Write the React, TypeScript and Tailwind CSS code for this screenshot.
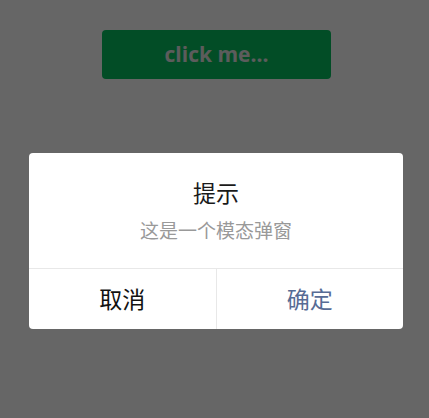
export default function App() {
	return (
		<div
			className="relative h-[418px] w-full overflow-hidden bg-white"
			style={{ fontFamily: '"Open Sans", "Noto Sans CJK SC", sans-serif' }}
		>
			<div className="flex flex-col pl-[102px] pt-[30px]">
				<button
					type="button"
					className="flex h-[49px] w-[229px] items-center justify-center rounded-[4px] bg-[#07c160] text-[21px] font-bold text-[#e6e6e6]"
				>
					click me...
				</button>
			</div>

			{/* mask + dialog */}
			<div className="absolute inset-0 bg-black/60">
				<div className="ml-[29px] mt-[153px] flex w-[374px] flex-col overflow-hidden rounded-[4px] bg-white font-['Noto_Sans_CJK_SC',sans-serif]">
					<div className="flex h-[116px] flex-col items-center border-b border-[#e8e8e8] pt-[22px]">
						<div className="text-[23px] leading-[34px] text-[#1a1a1a]">提示</div>
						<div className="mt-[8px] text-[19px] leading-[26px] text-[#999999]">
							这是一个模态弹窗
						</div>
					</div>
					<div className="flex h-[60px]">
						<button
							type="button"
							className="flex flex-1 items-center justify-center border-r border-[#e8e8e8] pb-[2px] text-[23px] text-[#111111]"
						>
							取消
						</button>
						<button
							type="button"
							className="flex flex-1 items-center justify-center pb-[2px] text-[23px] text-[#576b95]"
						>
							确定
						</button>
					</div>
				</div>
			</div>
		</div>
	);
}
